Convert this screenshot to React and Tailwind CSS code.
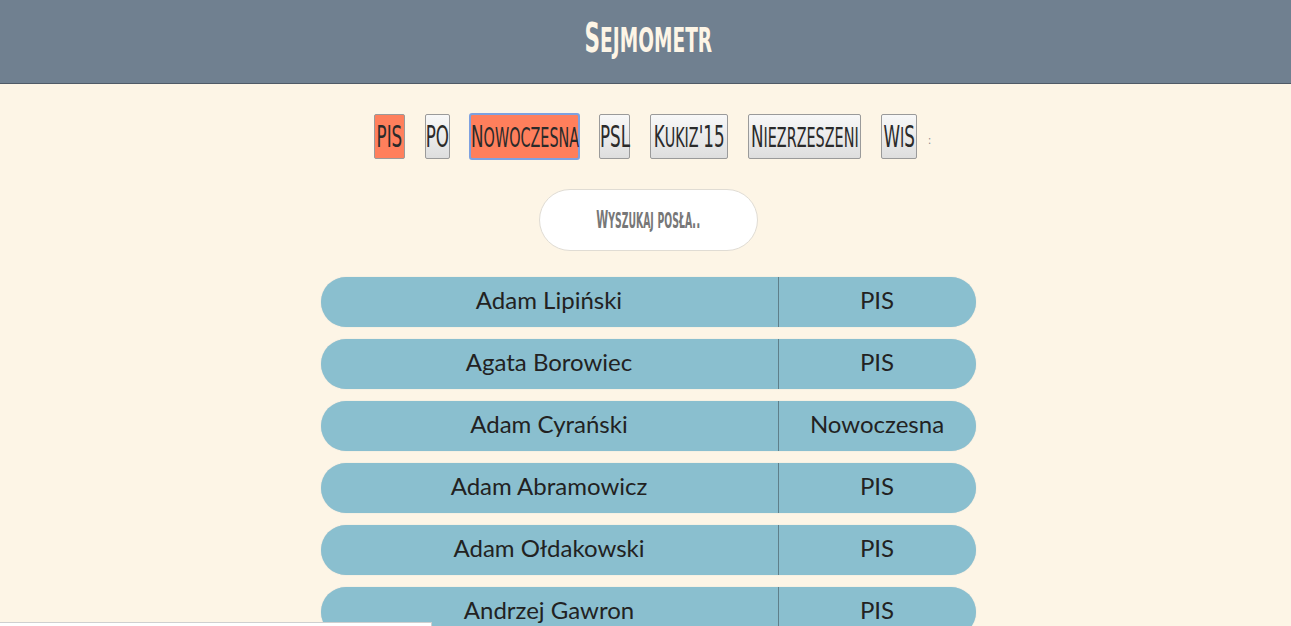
// App.jsx
const parties = [
  { name: "PIS", w: "w-[31px]", active: true },
  { name: "PO", w: "w-[25px]" },
  { name: "Nowoczesna", w: "w-[109px]", active: true, focus: true },
  { name: "PSL", w: "w-[31px]" },
  { name: "Kukiz'15", w: "w-[78px]" },
  { name: "Niezrzeszeni", w: "w-[113px]" },
  { name: "WiS", w: "w-[36px]" },
];

const posłowie = [
  ["Adam Lipiński", "PIS"],
  ["Agata Borowiec", "PIS"],
  ["Adam Cyrański", "Nowoczesna"],
  ["Adam Abramowicz", "PIS"],
  ["Adam Ołdakowski", "PIS"],
  ["Andrzej Gawron", "PIS"],
  ["Andrzej Adamczyk", "PIS"],
];

const hand = {
  fontFamily: '"DejaVu Sans Condensed", "Liberation Sans", sans-serif',
};

// small caps that stay almost as tall as the capitals, like the handwritten font
function SC({ text }) {
  return text.split("").map((ch, i) =>
    ch !== ch.toUpperCase() ? (
      <span key={i} className="text-[0.86em]">
        {ch.toUpperCase()}
      </span>
    ) : (
      <span key={i}>{ch}</span>
    )
  );
}

export default function App() {
  return (
    <div className="min-h-screen bg-[#fdf5e6]">
      {/* Header */}
      <header className="h-[84px] bg-[#708090] border-b border-[#4f5a66] flex items-center justify-center pl-[5px]">
        <h1
          style={hand}
          className="inline-block scale-x-[0.6] text-[40px] font-bold text-[#fdf5e6] -mt-[8px] whitespace-nowrap"
        >
          <SC text="Sejmometr" />
        </h1>
      </header>

      {/* Party filter */}
      <div className="flex items-center justify-center gap-5 pt-[30px] pl-[14px]">
        {parties.map((p) => (
          <button
            key={p.name}
            style={hand}
            className={`${p.w} h-[45px] flex items-center justify-center overflow-visible whitespace-nowrap text-[31px] text-[#2a2a2a] border rounded-[2px] ${
              p.active
                ? "bg-[#ff7f5c] border-[#9a9a9a]"
                : "bg-gradient-to-b from-[#f8f8f8] to-[#dedede] border-[#9a9a9a]"
            } ${p.focus ? "outline outline-2 outline-[#7ea1e0] -outline-offset-1" : ""}`}
          >
            <span className="inline-block scale-x-[0.6]">
              <SC text={p.name} />
            </span>
          </button>
        ))}
        <span className="text-[10px] text-[#888] -ml-[9px] mt-2">:</span>
      </div>

      {/* Search */}
      <div className="flex justify-center mt-[30px] pl-[5px]">
        <div
          style={hand}
          className="w-[219px] h-[62px] rounded-full bg-white border border-[#e0dcd4] flex items-center justify-center whitespace-nowrap text-[25px] font-bold text-[#777]"
        >
          <span className="inline-block scale-x-[0.48]">
            <SC text="Wyszukaj posła.." />
          </span>
        </div>
      </div>

      {/* List */}
      <div className="flex flex-col items-center gap-3 mt-[26px] pl-[5px]">
        {posłowie.map(([name, party]) => (
          <div
            key={name}
            style={{ fontFamily: 'Lato, "Noto Sans", sans-serif' }}
            className="w-[655px] h-[50px] rounded-[25px] bg-[#8abfcf] shadow-[0_0_1px_#b9c9cc] flex text-[24px] text-[#222] pb-[4px]"
          >
            <div className="w-[458px] -mb-[4px] border-r border-[#5f7f8a] flex items-center justify-center pb-[4px]">{name}</div>
            <div className="flex-1 flex items-center justify-center">{party}</div>
          </div>
        ))}
      </div>

      <div className="fixed bottom-0 left-0 w-[432px] h-[4px] bg-white border-t border-r border-[#cfcfcf]" />
    </div>
  );
}
